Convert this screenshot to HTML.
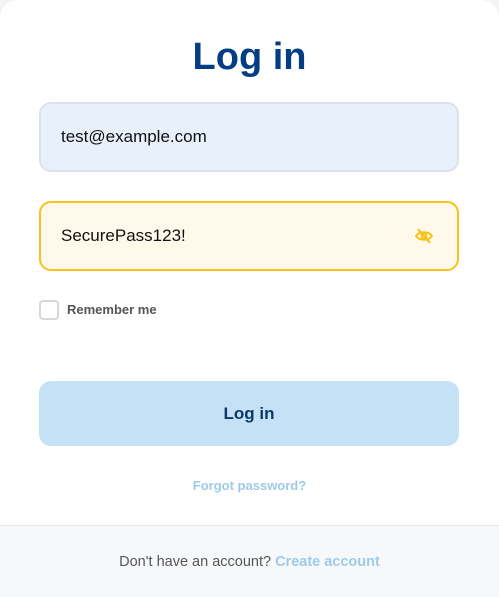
<!DOCTYPE html>
<html><head><style>
html,body{margin:0;padding:0;width:499px;height:597px;background:#f3f4f6;overflow:hidden;font-family:"Liberation Sans",sans-serif}
.card{position:absolute;left:0;top:0;width:499px;height:597px;background:#fff;border-radius:18px 18px 0 0;overflow:hidden}
h1{position:absolute;top:34px;left:0;width:499px;margin:0;text-align:center;font-size:38px;line-height:46px;font-weight:bold;color:#033e85}
.inp{position:absolute;left:39px;width:416px;height:66px;border:2px solid #dde1e8;border-radius:12px;background:#e8f0fc;font-size:17px;color:#111;line-height:66px;text-indent:20px}
.pw{border-color:#f8c21b;background:#fff9ec}
.cb{position:absolute;left:39px;top:300px;width:16px;height:16px;border:2px solid #d4d7dc;border-radius:4px;background:#fff}
.rl{position:absolute;left:67px;top:302px;font-size:13px;font-weight:bold;color:#555}
.btn{position:absolute;left:39px;top:381px;width:420px;height:65px;border-radius:12px;background:#c4e1f5;text-align:center;line-height:65px;font-size:17px;font-weight:bold;color:#0d3868}
.fp{position:absolute;top:478px;left:0;width:499px;text-align:center;font-size:13px;font-weight:bold;color:#9dcbe8}
.foot{position:absolute;left:0;top:525px;width:499px;height:72px;background:#f7f8fa;border-top:1px solid #e4e6ea;text-align:center;line-height:72px;font-size:14.5px;color:#555}
.foot b{color:#9dcbe8}
</style></head><body>
<div class="card">
<h1>Log in</h1>
<div class="inp" style="top:102px">test@example.com</div>
<div class="inp pw" style="top:201px">SecurePass123!
<svg style="position:absolute;left:374px;top:25px" width="18" height="16" viewBox="0 0 18 16" fill="none" stroke="#f8c21b" stroke-width="2"><path d="M1 8C4 3 14 3 17 8C14 13 4 13 1 8Z"/><circle cx="9" cy="8" r="2.5"/><path d="M3 1L15 15"/></svg></div>
<div class="cb"></div><div class="rl">Remember me</div>
<div class="btn">Log in</div>
<div class="fp">Forgot password?</div>
<div class="foot">Don't have an account? <b>Create account</b></div>
</div>
</body></html>
